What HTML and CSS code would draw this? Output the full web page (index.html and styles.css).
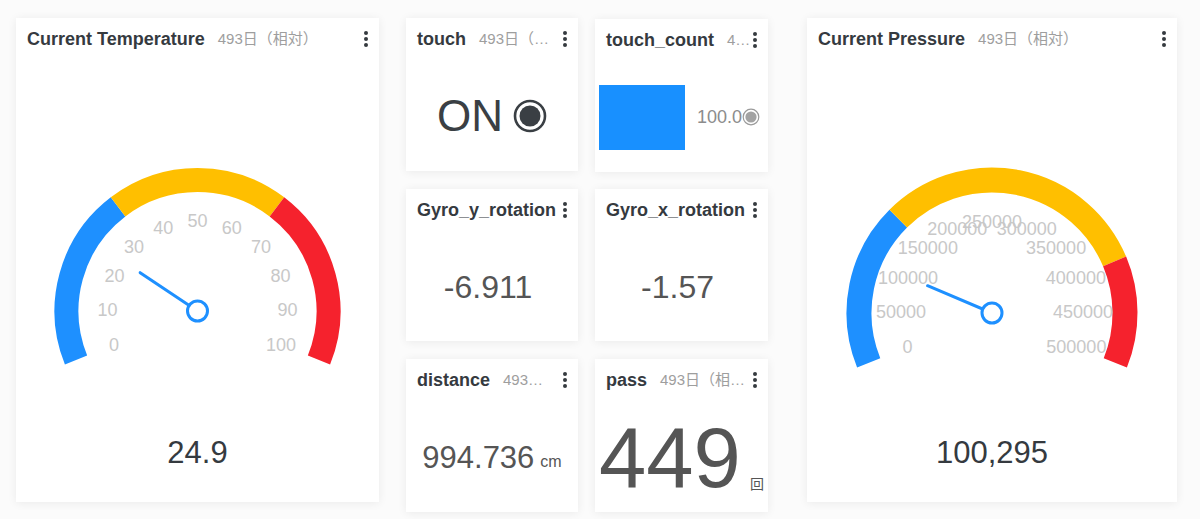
FILE: index.html
```html
<!DOCTYPE html>
<html lang="ja">
<head>
<meta charset="utf-8">
<title>Dashboard</title>
<link rel="stylesheet" href="styles.css">
</head>
<body>
<div class="dashboard">
  <section class="card gauge-card gauge-temp">
    <header class="card-head">
      <h2 class="card-title">Current Temperature</h2>
      <span class="card-sub"><span class="sub-text">493日（相対）</span></span>
      <span class="kebab"><svg viewBox="0 0 4 16" width="4" height="16"><circle cx="2" cy="2" r="2"/><circle cx="2" cy="8" r="2"/><circle cx="2" cy="14" r="2"/></svg></span>
    </header>
    <svg class="gauge" viewBox="0 0 363 350" width="363" height="350">
      <g fill="none" stroke-width="24">
        <path d="M60.04 309.07 A131 131 0 0 1 102.06 155.84" stroke="#1e90ff"/>
        <path d="M102.06 155.84 A131 131 0 0 1 260.94 155.84" stroke="#ffbf00"/>
        <path d="M260.94 155.84 A131 131 0 0 1 302.96 309.07" stroke="#f5222d"/>
      </g>
      <g class="gauge-labels">
        <text x="98.05" y="293.71">0</text>
        <text x="91.5" y="259.37">10</text>
        <text x="98.53" y="225.12">20</text>
        <text x="118.08" y="196.14">30</text>
        <text x="147.2" y="176.79">40</text>
        <text x="181.5" y="170">50</text>
        <text x="215.8" y="176.79">60</text>
        <text x="244.92" y="196.14">70</text>
        <text x="264.47" y="225.12">80</text>
        <text x="271.5" y="259.37">90</text>
        <text x="264.95" y="293.71">100</text>
      </g>
      <line x1="181.5" y1="260" x2="124.15" y2="221.63" stroke="#1e90ff" stroke-width="3" stroke-linecap="round"/>
      <circle cx="181.5" cy="260" r="10" fill="#fff" stroke="#1e90ff" stroke-width="3"/>
    </svg>
    <div class="gauge-value">24.9</div>
  </section>

  <div class="tiles">
    <section class="card tile">
      <header class="card-head">
        <h2 class="card-title">touch</h2>
        <span class="card-sub"><span class="sub-text">493日（相対）</span></span>
        <span class="kebab"><svg viewBox="0 0 4 16" width="4" height="16"><circle cx="2" cy="2" r="2"/><circle cx="2" cy="8" r="2"/><circle cx="2" cy="14" r="2"/></svg></span>
      </header>
      <div class="tile-body">
        <span class="state-text">ON</span>
        <svg class="state-icon" viewBox="0 0 34 34" width="34" height="34"><circle cx="17" cy="17" r="15" fill="none" stroke="#3a3f44" stroke-width="2.6"/><circle cx="17" cy="17" r="10.5" fill="#3a3f44"/></svg>
      </div>
    </section>

    <section class="card tile tile-offset">
      <header class="card-head">
        <h2 class="card-title">touch_count</h2>
        <span class="card-sub"><span class="sub-text">493日（相対）</span></span>
        <span class="kebab"><svg viewBox="0 0 4 16" width="4" height="16"><circle cx="2" cy="2" r="2"/><circle cx="2" cy="8" r="2"/><circle cx="2" cy="14" r="2"/></svg></span>
      </header>
      <div class="tile-body bar-body">
        <div class="bar" style="width: 86px"></div>
        <span class="bar-label">100.0</span>
        <svg class="bar-icon" viewBox="0 0 18 18" width="18" height="18"><circle cx="9" cy="9" r="7.8" fill="none" stroke="#9a9a9a" stroke-width="1.2"/><circle cx="9" cy="9" r="5.6" fill="#a3a3a3"/></svg>
      </div>
    </section>

    <section class="card tile">
      <header class="card-head">
        <h2 class="card-title">Gyro_y_rotation</h2>
        <span class="card-sub"><span class="sub-text">493日（相対）</span></span>
        <span class="kebab"><svg viewBox="0 0 4 16" width="4" height="16"><circle cx="2" cy="2" r="2"/><circle cx="2" cy="8" r="2"/><circle cx="2" cy="14" r="2"/></svg></span>
      </header>
      <div class="tile-body">
        <span class="num num-shift">-6.911</span>
      </div>
    </section>

    <section class="card tile">
      <header class="card-head">
        <h2 class="card-title">Gyro_x_rotation</h2>
        <span class="card-sub"><span class="sub-text">493日（相対）</span></span>
        <span class="kebab"><svg viewBox="0 0 4 16" width="4" height="16"><circle cx="2" cy="2" r="2"/><circle cx="2" cy="8" r="2"/><circle cx="2" cy="14" r="2"/></svg></span>
      </header>
      <div class="tile-body">
        <span class="num num-shift">-1.57</span>
      </div>
    </section>

    <section class="card tile">
      <header class="card-head">
        <h2 class="card-title">distance</h2>
        <span class="card-sub card-sub-narrow"><span class="sub-text">493日（相対）</span></span>
        <span class="kebab"><svg viewBox="0 0 4 16" width="4" height="16"><circle cx="2" cy="2" r="2"/><circle cx="2" cy="8" r="2"/><circle cx="2" cy="14" r="2"/></svg></span>
      </header>
      <div class="tile-body">
        <span class="num">994.736</span><span class="unit">cm</span>
      </div>
    </section>

    <section class="card tile">
      <header class="card-head">
        <h2 class="card-title">pass</h2>
        <span class="card-sub"><span class="sub-text">493日（相対）</span></span>
        <span class="kebab"><svg viewBox="0 0 4 16" width="4" height="16"><circle cx="2" cy="2" r="2"/><circle cx="2" cy="8" r="2"/><circle cx="2" cy="14" r="2"/></svg></span>
      </header>
      <div class="tile-body pass-body">
        <span class="big-num">449</span><span class="unit-cjk">回</span>
      </div>
    </section>
  </div>

  <section class="card gauge-card gauge-pressure">
    <header class="card-head">
      <h2 class="card-title">Current Pressure</h2>
      <span class="card-sub"><span class="sub-text">493日（相対）</span></span>
      <span class="kebab"><svg viewBox="0 0 4 16" width="4" height="16"><circle cx="2" cy="2" r="2"/><circle cx="2" cy="8" r="2"/><circle cx="2" cy="14" r="2"/></svg></span>
    </header>
    <svg class="gauge" viewBox="0 0 370 350" width="370" height="350">
      <g fill="none" stroke-width="25">
        <path d="M61.69 311.82 A133 133 0 0 1 91.28 167.63" stroke="#1e90ff"/>
        <path d="M91.28 167.63 A133 133 0 0 1 307.61 210.46" stroke="#ffbf00"/>
        <path d="M307.61 210.46 A133 133 0 0 1 308.31 311.82" stroke="#f5222d"/>
      </g>
      <g class="gauge-labels">
        <text x="100.63" y="296.09">0</text>
        <text x="94" y="261.36">50000</text>
        <text x="101.11" y="226.74">100000</text>
        <text x="120.88" y="197.43">150000</text>
        <text x="150.32" y="177.87">200000</text>
        <text x="185" y="171">250000</text>
        <text x="219.68" y="177.87">300000</text>
        <text x="249.12" y="197.43">350000</text>
        <text x="268.89" y="226.74">400000</text>
        <text x="276" y="261.36">450000</text>
        <text x="269.37" y="296.09">500000</text>
      </g>
      <line x1="185" y1="262" x2="120.53" y2="234.72" stroke="#1e90ff" stroke-width="3" stroke-linecap="round"/>
      <circle cx="185" cy="262" r="10" fill="#fff" stroke="#1e90ff" stroke-width="3"/>
    </svg>
    <div class="gauge-value">100,295</div>
  </section>
</div>
</body>
</html>
```

FILE: styles.css
```css
html, body {
  margin: 0;
  padding: 0;
}

body {
  background: #fbfbfb;
  font-family: "Liberation Sans", Arial, "Noto Sans CJK JP", sans-serif;
  color: #353a3f;
  width: 1200px;
  height: 519px;
  overflow: hidden;
}

.dashboard {
  display: flex;
  align-items: flex-start;
  padding: 18px 0 0 16px;
}

.card {
  background: #fff;
  box-shadow: 0 1px 9px rgba(0, 0, 0, 0.07);
  display: flex;
  flex-direction: column;
  overflow: hidden;
  box-sizing: border-box;
}

.card-head {
  display: flex;
  align-items: center;
  height: 24px;
  padding: 9px 10px 0 11px;
  flex: none;
}

.card-title {
  margin: 0;
  font-size: 18px;
  line-height: 24px;
  font-weight: 700;
  color: #353a3f;
  white-space: nowrap;
  flex: none;
}

.card-sub {
  flex: 1 1 auto;
  min-width: 0;
  overflow: hidden;
  white-space: nowrap;
  text-overflow: ellipsis;
  font-size: 15px;
  line-height: 24px;
  color: #9e9e9e;
  font-family: "Liberation Sans", "Noto Sans CJK JP", sans-serif;
}

.sub-text {
  margin-left: 13px;
}

.card-sub-narrow {
  max-width: 55px;
  flex-grow: 0;
  margin-right: auto;
}

.kebab {
  flex: none;
  width: 6px;
  display: flex;
  justify-content: center;
  align-items: center;
  margin-left: auto;
}

.kebab svg {
  display: block;
  fill: #353a3f;
}

/* Gauges */
.gauge-card {
  height: 484px;
}

.gauge-temp {
  width: 363px;
}

.gauge-pressure {
  width: 370px;
  margin-left: 39px;
}

.gauge {
  display: block;
  flex: none;
}

.gauge-labels text {
  font-family: "Liberation Sans", Arial, sans-serif;
  font-size: 18px;
  fill: #c8c8c8;
  text-anchor: middle;
  dominant-baseline: central;
}

.gauge-value {
  margin-top: 34px;
  text-align: center;
  font-size: 31px;
  line-height: 36px;
  color: #353a3f;
}

/* Tiles */
.tiles {
  margin-left: 27px;
  display: grid;
  grid-template-columns: 172px 173px;
  grid-template-rows: 153px 152px 153px;
  column-gap: 17px;
  row-gap: 18px;
}

.tile {
  height: 100%;
}

.tile-offset {
  margin-top: 1px;
}

.tile-body {
  flex: 1;
  display: flex;
  align-items: center;
  justify-content: center;
  padding-top: 10px;
  min-height: 0;
}

.state-text {
  font-size: 44px;
  line-height: 1;
  color: #3a3f44;
}

.state-icon {
  display: block;
  margin-left: 10px;
}

.bar-body {
  justify-content: flex-start;
  padding-left: 4px;
}

.bar {
  height: 65px;
  background: #1890ff;
  flex: none;
}

.bar-label {
  margin-left: 12px;
  font-size: 18px;
  color: #8c8c8c;
}

.bar-icon {
  display: block;
  flex: none;
}

.num {
  font-size: 31px;
  line-height: 1;
  color: #555;
}

.num-shift {
  margin-right: 8px;
  font-size: 32px;
}

.unit {
  font-size: 16px;
  color: #555;
  margin-left: 6px;
  align-self: center;
  margin-top: 10px;
}

.pass-body {
  align-items: center;
}

.big-num {
  font-size: 85px;
  line-height: 1;
  color: #555;
}

.unit-cjk {
  font-family: "Noto Sans CJK JP", sans-serif;
  font-size: 14px;
  color: #555;
  margin-left: 9px;
  align-self: flex-end;
  margin-bottom: 19px;
}
```
